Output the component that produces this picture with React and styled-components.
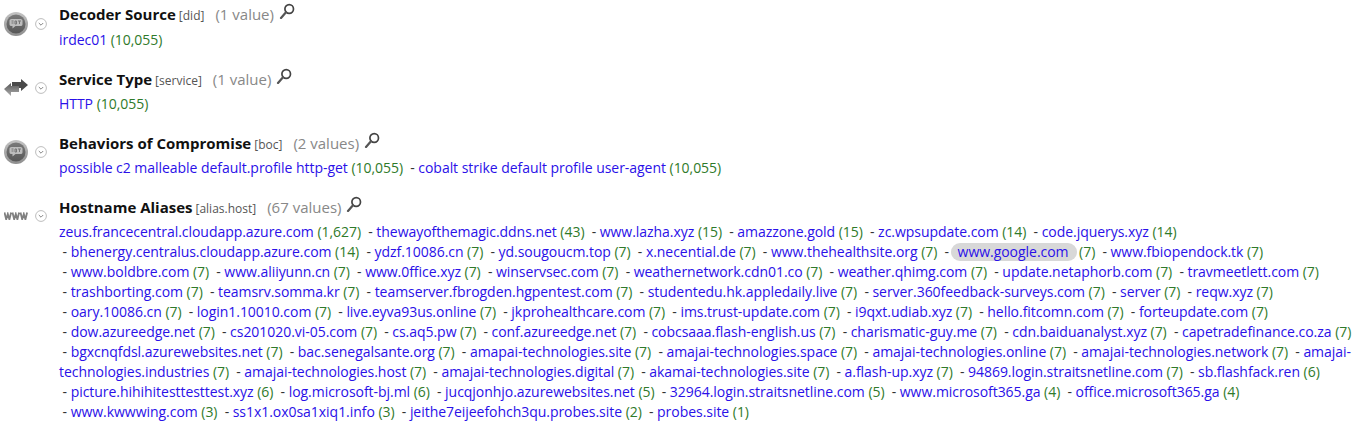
import React from 'react';
import styled, { createGlobalStyle } from 'styled-components';

const GlobalStyle = createGlobalStyle`
  html, body {
    margin: 0;
    padding: 0;
    background: #fff;
  }
  body {
    font-family: "Open Sans", "Liberation Sans", sans-serif;
    font-size: 14px;
    color: #333;
  }
`;

const Page = styled.div`
  width: 1366px;
  height: 436px;
  overflow: hidden;
`;

const Section = styled.section`
  display: grid;
  grid-template-columns: 59px 1fr;
  min-height: 64px;
`;

const IconCol = styled.div`
  display: flex;
  align-items: center;
  height: 47px;
  box-sizing: border-box;
`;

const TypeIconBox = styled.div`
  width: 35px;
  padding-left: 4px;
  box-sizing: border-box;
  display: flex;
  align-items: center;
`;

const Chevron = styled.svg`
  width: 12px;
  height: 12px;
  flex: none;
`;

const Title = styled.div`
  display: flex;
  align-items: baseline;
  height: 30px;
  line-height: ${(p) => (p.$tight ? 28 : 30)}px;
`;

const Name = styled.span`
  font-weight: 700;
  font-size: 15px;
  color: #111;
`;

const Tag = styled.span`
  font-size: 12px;
  color: #555;
  margin-left: 3px;
`;

const Count = styled.span`
  font-size: 15px;
  color: #888;
  margin-left: 11px;
`;

const Magnifier = styled.svg`
  width: 16px;
  height: 16px;
  margin-left: 5px;
  align-self: flex-start;
  margin-top: ${(p) => (p.$tight ? 3 : 4)}px;
`;

const Values = styled.div`
  font-size: 14px;
  line-height: 20px;
  letter-spacing: -0.04px;
  margin-right: 13px;
`;

const Glue = styled.span`
  white-space: nowrap;
`;

const Link = styled.a`
  color: #2a10e8;
  text-decoration: none;
`;

const MarkedLink = styled(Link)`
  display: inline-block;
  height: 18px;
  line-height: 18px;
  background: #d8d8d8;
  border-radius: 9px;
  padding: 0 9px 0 7px;
  margin: 0 -2px;
`;

const Num = styled.span`
  color: #2f7a2a;
`;

const BubbleIcon = () => (
  <svg width="24" height="24" viewBox="0 0 24 24">
    <defs>
      <linearGradient id="bubEdge" x1="0" y1="0" x2="0" y2="1">
        <stop offset="0" stopColor="#c4c4c4" />
        <stop offset="1" stopColor="#8e8e8e" />
      </linearGradient>
      <linearGradient id="bubFill" x1="0" y1="0" x2="0" y2="1">
        <stop offset="0" stopColor="#7a7a7a" />
        <stop offset="1" stopColor="#585858" />
      </linearGradient>
    </defs>
    <circle cx="12" cy="12" r="12" fill="url(#bubEdge)" />
    <circle cx="12" cy="12" r="9.500" fill="url(#bubFill)" />
    <path d="M5.500 8.500q0-1.500 2-1.500h9q2 0 2 1.500v4q0 1.500-2 1.500h-5l-3 2.500v-2.500h-1q-2 0-2-1.500z" fill="#bdbdbd" />
    <path d="M7.500 9h2M7.500 11h2M11 9h1.500v3H11zM14 9h3M15.500 9v3" stroke="#777" strokeWidth="1" fill="none" />
  </svg>
);

const ArrowsIcon = () => (
  <svg width="24" height="17" viewBox="0 0 24 17">
    <defs>
      <linearGradient id="arrLow" x1="0" y1="0" x2="0" y2="1">
        <stop offset="0" stopColor="#555" />
        <stop offset="1" stopColor="#b0b0b0" />
      </linearGradient>
    </defs>
    <path d="M8 3h9V0l7 6-7 6V9H8z" fill="#4a4a4a" />
    <path d="M15 7H7V4L0 10l7 7v-4h8z" fill="url(#arrLow)" />
  </svg>
);

const WwwIcon = () => (
  <svg width="24" height="8" viewBox="0 0 24 8">
    <path d="M.5 .5l1.700 7 1.600-5.500 1.600 5.500 1.700-7M8.500 .5l1.700 7 1.600-5.500 1.600 5.500 1.700-7M16.500 .5l1.700 7 1.600-5.500 1.600 5.500 1.700-7" fill="none" stroke="#808080" strokeWidth="1.800" />
  </svg>
);

const ChevronCircle = () => (
  <Chevron viewBox="0 0 12 12">
    <circle cx="6" cy="6" r="5.400" fill="#fff" stroke="#bdbdbd" />
    <path d="M3.800 5l2.200 2.200L8.200 5" fill="none" stroke="#888" strokeWidth="1" />
  </Chevron>
);

const MagnifierIcon = ({ tight }) => (
  <Magnifier viewBox="0 0 16 16" $tight={tight}>
    <circle cx="10.200" cy="6" r="4.300" fill="#fff" stroke="#444" strokeWidth="1.700" />
    <path d="M7 9.300L2 15" stroke="#555" strokeWidth="2.200" strokeLinecap="round" />
  </Magnifier>
);

const sections = [
  {
    name: 'Decoder Source', tag: '[did]', count: '(1 value)', icon: <BubbleIcon />, tight: true,
    values: [['irdec01', '10,055']],
  },
  {
    name: 'Service Type', tag: '[service]', count: '(1 value)', icon: <ArrowsIcon />,
    values: [['HTTP', '10,055']],
  },
  {
    name: 'Behaviors of Compromise', tag: '[boc]', count: '(2 values)', icon: <BubbleIcon />,
    values: [['possible c2 malleable default.profile http-get', '10,055'], ['cobalt strike default profile user-agent', '10,055']],
  },
  {
    name: 'Hostname Aliases', tag: '[alias.host]', count: '(67 values)', icon: <WwwIcon />,
    values: [
      ['zeus.francecentral.cloudapp.azure.com', '1,627'], ['thewayofthemagic.ddns.net', '43'], ['www.lazha.xyz', '15'],
      ['amazzone.gold', '15'], ['zc.wpsupdate.com', '14'], ['code.jquerys.xyz', '14'],
      ['bhenergy.centralus.cloudapp.azure.com', '14'], ['ydzf.10086.cn', '7'], ['yd.sougoucm.top', '7'], ['x.necential.de', '7'],
      ['www.thehealthsite.org', '7'], ['www.google.com', '7', true], ['www.fbiopendock.tk', '7'],
      ['www.boldbre.com', '7'], ['www.aliiyunn.cn', '7'], ['www.0ffice.xyz', '7'], ['winservsec.com', '7'], ['weathernetwork.cdn01.co', '7'],
      ['weather.qhimg.com', '7'], ['update.netaphorb.com', '7'], ['travmeetlett.com', '7'],
      ['trashborting.com', '7'], ['teamsrv.somma.kr', '7'], ['teamserver.fbrogden.hgpentest.com', '7'], ['studentedu.hk.appledaily.live', '7'],
      ['server.360feedback-surveys.com', '7'], ['server', '7'], ['reqw.xyz', '7'],
      ['oary.10086.cn', '7'], ['login1.10010.com', '7'], ['live.eyva93us.online', '7'], ['jkprohealthcare.com', '7'], ['ims.trust-update.com', '7'],
      ['i9qxt.udiab.xyz', '7'], ['hello.fitcomn.com', '7'], ['forteupdate.com', '7'],
      ['dow.azureedge.net', '7'], ['cs201020.vi-05.com', '7'], ['cs.aq5.pw', '7'], ['conf.azureedge.net', '7'], ['cobcsaaa.flash-english.us', '7'],
      ['charismatic-guy.me', '7'], ['cdn.baiduanalyst.xyz', '7'], ['capetradefinance.co.za', '7'],
      ['bgxcnqfdsl.azurewebsites.net', '7'], ['bac.senegalsante.org', '7'], ['amapai-technologies.site', '7'], ['amajai-technologies.space', '7'],
      ['amajai-technologies.online', '7'], ['amajai-technologies.network', '7'], ['amajai-technologies.industries', '7'],
      ['amajai-technologies.host', '7'], ['amajai-technologies.digital', '7'], ['akamai-technologies.site', '7'], ['a.flash-up.xyz', '7'],
      ['94869.login.straitsnetline.com', '7'], ['sb.flashfack.ren', '6'],
      ['picture.hihihitesttesttest.xyz', '6'], ['log.microsoft-bj.ml', '6'], ['jucqjonhjo.azurewebsites.net', '5'], ['32964.login.straitsnetline.com', '5'],
      ['www.microsoft365.ga', '4'], ['office.microsoft365.ga', '4'],
      ['www.kwwwing.com', '3'], ['ss1x1.ox0sa1xiq1.info', '3'], ['jeithe7eijeefohch3qu.probes.site', '2'], ['probes.site', '1'],
    ],
  },
];

// the dash stays glued to the host, a long host may still break after its first hyphen
const ValueItem = ({ host, n, marked, first }) => {
  const cut = host.indexOf('-') + 1;
  const head = marked || !cut ? host : host.slice(0, cut);
  const rest = head === host ? '' : host.slice(cut);
  return (
    <>
      <Glue>
        {!first && '\u00a0-\u00a0'}
        {marked ? <MarkedLink>{head}</MarkedLink> : <Link>{head}</Link>}
      </Glue>
      {rest && <Link>{rest}</Link>} <Num>({n})</Num>{' '}
    </>
  );
};

export default function App() {
  return (
    <>
      <GlobalStyle />
      <Page>
        {sections.map((s) => (
          <Section key={s.name}>
            <IconCol>
              <TypeIconBox>{s.icon}</TypeIconBox>
              <ChevronCircle />
            </IconCol>
            <div>
              <Title $tight={s.tight}>
                <Name>{s.name}</Name>
                <Tag>{s.tag}</Tag>
                <Count>{s.count}</Count>
                <MagnifierIcon tight={s.tight} />
              </Title>
              <Values>
                {s.values.map(([host, n, marked], i) => (
                  <ValueItem key={host} host={host} n={n} marked={marked} first={i === 0} />
                ))}
              </Values>
            </div>
          </Section>
        ))}
      </Page>
    </>
  );
}
